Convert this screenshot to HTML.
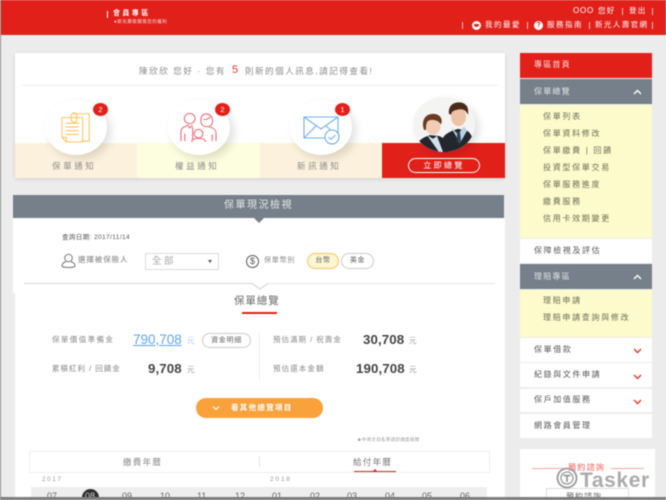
<!DOCTYPE html>
<html lang="zh-Hant"><head><meta charset="utf-8"><style>
*{box-sizing:border-box}
html,body{margin:0;padding:0;width:666px;height:500px;overflow:hidden;background:#ececec}
#p{position:relative;width:666px;height:500px;overflow:hidden;background:#ececec;filter:blur(.55px);font-family:"Liberation Sans","Noto Sans CJK TC",sans-serif;color:#666}
.a{position:absolute}
.t{position:absolute;white-space:nowrap;line-height:1}
.m{font-size:8px;letter-spacing:1.7px;color:#6d6d55}
.w{font-size:8px;letter-spacing:1.6px;color:#555}
.c{position:absolute;width:62px;height:55px;border-radius:50%;background:#fff;box-shadow:4px 4px 9px rgba(0,0,0,.13)}
.b{position:absolute;width:15px;height:13px;border-radius:50%;background:#e2201a;color:#fff;font-size:7.5px;line-height:13px;text-align:center}
.l{position:absolute;font-size:9px;letter-spacing:1.8px;color:#888;white-space:nowrap;line-height:1}
.n{position:absolute;font-size:13.3px;font-weight:bold;color:#444;white-space:nowrap;line-height:1;letter-spacing:.1px}
.y{position:absolute;font-size:6.5px;color:#999;line-height:1}
.mo{position:absolute;font-size:9px;color:#666;line-height:1;top:492px}
</style></head><body><div id="p">
<div class="a" style="left:0;top:0;width:1px;height:500px;background:#8a8a8a;z-index:5"></div>
<!-- header -->
<div class="a" style="left:0;top:0;width:666px;height:35px;background:#e2201a"></div>
<div class="a" style="left:107px;top:11px;width:1px;height:7px;background:#fff"></div>
<div class="t" style="left:113px;top:10px;font-size:7px;letter-spacing:2.4px;font-weight:bold;color:#fff">會員專區</div>
<div class="t" style="left:114px;top:20px;font-size:4.5px;letter-spacing:.5px;color:#fbdcdc">●新光壽險關懷您的權利</div>
<div class="t" style="left:573px;top:7px;font-size:8px;letter-spacing:.8px;color:#fff">OOO</div>
<div class="t" style="left:598px;top:7px;font-size:7.5px;letter-spacing:1.2px;color:#fff">您好</div>
<div class="a" style="left:622px;top:8px;width:1px;height:7px;background:#f7bcbc"></div>
<div class="t" style="left:629px;top:7px;font-size:7.5px;letter-spacing:1.2px;color:#fff">登出</div>
<div class="a" style="left:652px;top:8px;width:1px;height:7px;background:#f7bcbc"></div>
<div class="a" style="left:462px;top:22px;width:1px;height:7px;background:#f7bcbc"></div>
<div class="a" style="left:472px;top:21px;width:9px;height:9px;border-radius:50%;background:#fff"></div>
<div class="a" style="left:474px;top:23.5px;width:5px;height:3px;background:#e2201a;border-radius:0 0 3px 3px"></div>
<div class="t" style="left:485px;top:21px;font-size:7.5px;letter-spacing:1.5px;color:#fff">我的最愛</div>
<div class="a" style="left:527px;top:22px;width:1px;height:7px;background:#f7bcbc"></div>
<div class="a" style="left:534px;top:21px;width:9px;height:9px;border-radius:50%;background:#fff;color:#e2201a;font-size:7px;line-height:9px;text-align:center;font-weight:bold">?</div>
<div class="t" style="left:547px;top:21px;font-size:7.5px;letter-spacing:1.5px;color:#fff">服務指南</div>
<div class="a" style="left:589px;top:22px;width:1px;height:7px;background:#f7bcbc"></div>
<div class="t" style="left:595px;top:21px;font-size:7.5px;letter-spacing:1.4px;color:#fff">新光人壽官網</div>
<div class="a" style="left:652px;top:22px;width:1px;height:7px;background:#f7bcbc"></div>

<!-- notification card -->
<div class="a" style="left:15px;top:53px;width:490px;height:125px;background:#fff;box-shadow:0 1px 4px rgba(0,0,0,.12)"></div>
<div class="t" style="left:139px;top:67px;font-size:8.5px;letter-spacing:1.6px;color:#8a8a8a">陳欣欣 您好 · 您有</div>
<div class="t" style="left:232px;top:65px;font-size:11px;color:#e8332c">5</div>
<div class="t" style="left:245px;top:67px;font-size:8.5px;letter-spacing:1.55px;color:#8a8a8a">則新的個人訊息,請記得查看!</div>
<div class="a" style="left:22px;top:85px;width:476px;height:1px;background:#ececec"></div>
<div class="a" style="left:15px;top:143px;width:122px;height:35px;background:#fcf1dc"></div>
<div class="a" style="left:137px;top:143px;width:123px;height:35px;background:#fdfddf"></div>
<div class="a" style="left:260px;top:143px;width:122px;height:35px;background:#fcf1dc"></div>
<div class="a" style="left:382px;top:143px;width:123px;height:35px;background:#e2201a"></div>

<div class="c" style="left:45px;top:100px"></div>
<div class="c" style="left:168px;top:100px"></div>
<div class="c" style="left:290px;top:100px"></div>
<div class="c" style="left:413px;top:97px"></div>

<!-- doc icon -->
<svg class="a" style="left:60px;top:110px" width="32" height="34" viewBox="0 0 34 34" fill="none" stroke="#fbbf4e" stroke-width="1">
<path d="M14 3H31V32H24"/><path d="M2 7H24V33H7L2 28Z"/><path d="M2 28H7V33"/><path d="M6 13H20M6 17H20M6 21H20M6 25H20"/><rect x="12" y="2" width="6" height="10" rx="3"/>
</svg>
<!-- people icon -->
<svg class="a" style="left:179px;top:112px" width="39" height="31" viewBox="0 0 40 33" preserveAspectRatio="none" fill="none" stroke="#ee5a66" stroke-width="1">
<circle cx="11" cy="7" r="5.5"/><path d="M2 31V21C2 17 5 16 9 14L11 17L14 14"/><path d="M6 31V23"/><path d="M14 16V30"/>
<path d="M24 14C21 10 22 2 28 2C34 2 36 10 33 14C31 16 26 16 24 14Z"/><path d="M25 8C28 8 31 7 32 5"/><path d="M31 16C36 17 38 19 38 23V31M34 24V31"/>
<circle cx="20" cy="23" r="4.5"/><path d="M13 32C13 29 16 28 20 28C24 28 27 29 27 32"/>
</svg>
<!-- mail icon -->
<svg class="a" style="left:303px;top:115px" width="38" height="30" viewBox="0 0 38 30" fill="none" stroke="#6fb0f2" stroke-width="1.1">
<path d="M1 2H35V23H1Z"/><path d="M1 2L18 14L35 2"/><path d="M1 23L13 11M23 11L30 17"/>
<circle cx="29" cy="22" r="7" fill="#fff"/><path d="M25.5 22L28 24.5L32.5 20"/>
</svg>

<!-- portrait -->
<svg class="a" style="left:413px;top:97px" width="62" height="55" viewBox="0 0 62 62" preserveAspectRatio="none">
<defs><clipPath id="cp"><circle cx="31" cy="31" r="31"/></clipPath></defs>
<g clip-path="url(#cp)">
<rect width="62" height="62" fill="#f4f4f2"/>
<path d="M30 46C33 40 40 38 45 36L54 38C57 40 59 44 60 48V62H28Z" fill="#23262c"/>
<path d="M38 34L45 42L51 33L54 38L47 52L41 40Z" fill="#b7d3e6"/>
<path d="M44 39H47L48 50L46 53L44 50Z" fill="#2e4258"/>
<ellipse cx="45.5" cy="22" rx="7.5" ry="11" fill="#eec2a5"/>
<path d="M36 19C35 10 40 6 46 6C53 6 56 11 55 20C53 15 50 13 46 14C42 15 39 15 38 20Z" fill="#4a2a1b"/>
<path d="M4 53C7 47 12 45 17 43L26 44C31 46 35 50 37 62H8Z" fill="#23262c"/>
<path d="M14 43L20 47L24 44L30 62H26Z" fill="#cfe2ee"/>
<ellipse cx="20" cy="33" rx="7.5" ry="9.5" fill="#f2cdb5"/>
<path d="M11 37C8 27 12 19 20 19C28 19 30 26 28 31C26 27 22 25 17 26C13 27 13 32 13 37Z" fill="#6b3a22"/>
</g></svg>

<div class="b" style="left:93px;top:103px">2</div>
<div class="b" style="left:215px;top:103px">2</div>
<div class="b" style="left:335px;top:103px">1</div>

<div class="t" style="left:52px;top:162px;font-size:8.5px;letter-spacing:2.6px;color:#8e8e8e">保單通知</div>
<div class="t" style="left:175px;top:162px;font-size:8.5px;letter-spacing:2.6px;color:#8e8e8e">權益通知</div>
<div class="t" style="left:297px;top:162px;font-size:8.5px;letter-spacing:2.6px;color:#8e8e8e">新訊通知</div>
<div class="a" style="left:408px;top:158px;width:72px;height:15px;border:1px solid #fff;border-radius:8px;color:#fff;font-size:8px;letter-spacing:2.4px;line-height:13px;text-align:center">立即總覽</div>

<!-- overview -->
<div class="a" style="left:15px;top:290px;width:490px;height:210px;background:#fff"></div>
<div class="a" style="left:13px;top:218px;width:492px;height:75px;background:#fff"></div>
<div class="a" style="left:13px;top:195px;width:491px;height:23px;background:#76808a"></div>
<div class="a" style="left:254px;top:218px;width:0;height:0;border-left:5px solid transparent;border-right:5px solid transparent;border-top:5px solid #76808a"></div>
<div class="t" style="left:224px;top:201px;font-size:10px;letter-spacing:1.5px;color:#e4e7ea">保單現況檢視</div>

<div class="t" style="left:62px;top:235px;font-size:6.5px;letter-spacing:.4px;color:#555">查詢日期: 2017/11/14</div>
<svg class="a" style="left:61px;top:253px" width="15" height="16" viewBox="0 0 15 16" fill="none" stroke="#777" stroke-width="1"><circle cx="7.5" cy="5" r="3.8"/><path d="M5 8.5C1 10 1 12 1 13C1 15 14 15 14 13C14 11 13 10 10 8.5"/></svg>
<div class="t" style="left:78px;top:256px;font-size:7.5px;letter-spacing:.9px;color:#777">選擇被保險人</div>
<div class="a" style="left:145px;top:253px;width:74px;height:17px;border:1px solid #ddd;background:#fff"></div>
<div class="t" style="left:152px;top:257px;font-size:9.5px;letter-spacing:2.5px;color:#a5a5a5">全部</div>
<div class="a" style="left:208px;top:260px;width:0;height:0;border-left:2.5px solid transparent;border-right:2.5px solid transparent;border-top:3px solid #555"></div>
<div class="a" style="left:246px;top:255px;width:13px;height:13px;border:1px solid #555;border-radius:50%;font-size:9px;line-height:11px;text-align:center;color:#555">$</div>
<div class="t" style="left:264px;top:257px;font-size:7px;letter-spacing:.8px;color:#888">保單幣別</div>
<div class="a" style="left:307px;top:253px;width:32px;height:16px;border:1px solid #f9bf63;border-radius:8px;background:#fdf6d2;font-size:7px;line-height:14px;text-align:center;letter-spacing:.6px;color:#666">台幣</div>
<div class="a" style="left:341px;top:253px;width:33px;height:16px;border:1px solid #ccc;border-radius:8px;background:#fff;font-size:7px;line-height:14px;text-align:center;letter-spacing:.6px;color:#666">美金</div>

<div class="a" style="left:24px;top:283px;width:228px;height:1px;background:#d8d8d8"></div>
<div class="a" style="left:267px;top:283px;width:228px;height:1px;background:#e6e6e6"></div>
<svg class="a" style="left:250px;top:283px" width="20" height="7" viewBox="0 0 20 7" fill="none" stroke="#d0d0d0"><path d="M2 .5L10 6L18 .5"/></svg>
<div class="t" style="left:234px;top:296px;font-size:10.5px;letter-spacing:.9px;color:#666">保單總覽</div>
<div class="a" style="left:242px;top:312px;width:35px;height:2px;background:#e2201a"></div>

<div class="l" style="left:52px;top:336px;font-size:7.5px;letter-spacing:1.4px">保單價值準備金</div>
<div class="t" style="left:133px;top:333px;font-size:13.5px;color:#5da5ea;text-decoration:underline">790,708</div>
<div class="t" style="left:187px;top:337px;font-size:7.5px;color:#a5c8ea">元</div>
<div class="a" style="left:202px;top:333px;width:49px;height:15px;border:1px solid #ccc;border-radius:8px;font-size:7px;line-height:13px;text-align:center;letter-spacing:.7px;color:#666">資金明細</div>
<div class="l" style="left:52px;top:365px;font-size:7.5px;letter-spacing:1px">累積紅利 / 回饋金</div>
<div class="n" style="left:148px;top:362px">9,708</div>
<div class="t" style="left:187px;top:366px;font-size:7.5px;color:#999">元</div>
<div class="a" style="left:259px;top:333px;width:1px;height:47px;background:#eee"></div>
<div class="l" style="left:273px;top:336px;font-size:7.5px;letter-spacing:1px">預估滿期 / 祝壽金</div>
<div class="n" style="left:363px;top:333px">30,708</div>
<div class="t" style="left:409px;top:337px;font-size:7.5px;color:#999">元</div>
<div class="l" style="left:273px;top:365px;font-size:7.5px;letter-spacing:1.1px">預估還本金額</div>
<div class="n" style="left:356px;top:362px">190,708</div>
<div class="t" style="left:409px;top:366px;font-size:7.5px;color:#999">元</div>

<div class="a" style="left:196px;top:398px;width:127px;height:20px;border-radius:10px;background:#f9a13a"></div>
<svg class="a" style="left:212px;top:405px" width="8" height="6" viewBox="0 0 8 6" fill="none" stroke="#fff" stroke-width="1.2"><path d="M1 1.5L4 4.5L7 1.5"/></svg>
<div class="t" style="left:231px;top:404px;font-size:7.5px;font-weight:bold;letter-spacing:1.3px;color:#fff">看其他總覽項目</div>

<div class="t" style="left:357px;top:438px;font-size:4.5px;letter-spacing:.3px;color:#999">★中英文白名單請舒適度保障</div>

<div class="a" style="left:29px;top:451px;width:461px;height:22px;border:1px solid #eee;background:#fff"></div>
<div class="a" style="left:259px;top:456px;width:1px;height:11px;background:#e6e6e6"></div>
<div class="t" style="left:123px;top:458px;font-size:8.5px;letter-spacing:1.3px;color:#888">繳費年曆</div>
<div class="t" style="left:353px;top:458px;font-size:8.5px;letter-spacing:1.3px;color:#777">給付年曆</div>
<div class="a" style="left:354px;top:471px;width:42px;height:1px;background:#e2201a"></div>
<div class="a" style="left:372px;top:469px;width:0;height:0;border-left:3px solid transparent;border-right:3px solid transparent;border-bottom:3px solid #e2201a"></div>
<div class="y" style="left:42px;top:477px;letter-spacing:1.5px">2017</div>
<div class="y" style="left:270px;top:477px;letter-spacing:1.8px">2018</div>
<div class="a" style="left:31px;top:487px;width:456px;height:13px;background:#eeeeee"></div>
<div class="a" style="left:82px;top:489px;width:17px;height:17px;border-radius:50%;background:#2d2d2d"></div>
<div class="mo" style="left:47px">07</div><div class="mo" style="left:85px;color:#ccc">08</div><div class="mo" style="left:122px">09</div><div class="mo" style="left:160px">10</div><div class="mo" style="left:197px">11</div><div class="mo" style="left:235px">12</div>
<div class="mo" style="left:272px">01</div><div class="mo" style="left:310px">02</div><div class="mo" style="left:347px">03</div><div class="mo" style="left:385px">04</div><div class="mo" style="left:422px">05</div><div class="mo" style="left:460px">06</div>

<!-- sidebar -->
<div class="a" style="left:520px;top:53px;width:132px;height:25px;background:#e2201a"></div>
<div class="t" style="left:534px;top:61px;font-size:8px;letter-spacing:1.2px;color:#fbe1e0">專區首頁</div>
<div class="a" style="left:520px;top:79px;width:132px;height:25px;background:#76808a"></div>
<div class="t" style="left:534px;top:88px;font-size:8px;letter-spacing:1.2px;color:#dfe3e6">保單總覽</div>
<svg class="a" style="left:633px;top:89px" width="9" height="6" viewBox="0 0 9 6" fill="none" stroke="#fff" stroke-width="1.4"><path d="M1 5L4.5 1.5L8 5"/></svg>
<div class="a" style="left:520px;top:105px;width:132px;height:133px;background:#fdfbcc"></div>
<div class="t m" style="left:543px;top:113px">保單列表</div>
<div class="t m" style="left:543px;top:130px">保單資料修改</div>
<div class="t m" style="left:543px;top:147px">保單繳費 | 回饋</div>
<div class="t m" style="left:543px;top:164px">投資型保單交易</div>
<div class="t m" style="left:543px;top:181px">保單服務進度</div>
<div class="t m" style="left:543px;top:198px">繳費服務</div>
<div class="t m" style="left:543px;top:215px">信用卡效期變更</div>
<div class="a" style="left:520px;top:239px;width:132px;height:24px;background:#fff"></div>
<div class="t w" style="left:534px;top:247px">保障檢視及評估</div>
<div class="a" style="left:520px;top:264px;width:132px;height:25px;background:#76808a"></div>
<div class="t" style="left:534px;top:273px;font-size:8px;letter-spacing:1.2px;color:#dfe3e6">理賠專區</div>
<svg class="a" style="left:633px;top:274px" width="9" height="6" viewBox="0 0 9 6" fill="none" stroke="#fff" stroke-width="1.4"><path d="M1 5L4.5 1.5L8 5"/></svg>
<div class="a" style="left:520px;top:290px;width:132px;height:47px;background:#fdfbcc"></div>
<div class="t m" style="left:543px;top:297px">理賠申請</div>
<div class="t m" style="left:543px;top:314px">理賠申請查詢與修改</div>
<div class="a" style="left:520px;top:338px;width:132px;height:24px;background:#fff"></div>
<div class="t w" style="left:534px;top:346px">保單借款</div>
<div class="a" style="left:520px;top:363px;width:132px;height:24px;background:#fff"></div>
<div class="t w" style="left:534px;top:371px">紀錄與文件申請</div>
<div class="a" style="left:520px;top:389px;width:132px;height:23px;background:#fff"></div>
<div class="t w" style="left:534px;top:396px">保戶加值服務</div>
<div class="a" style="left:520px;top:414px;width:132px;height:24px;background:#fff"></div>
<div class="t w" style="left:534px;top:422px">網路會員管理</div>
<svg class="a" style="left:633px;top:348px" width="9" height="6" viewBox="0 0 9 6" fill="none" stroke="#e8332c" stroke-width="1.4"><path d="M1 1L4.5 4.5L8 1"/></svg>
<svg class="a" style="left:633px;top:374px" width="9" height="6" viewBox="0 0 9 6" fill="none" stroke="#e8332c" stroke-width="1.4"><path d="M1 1L4.5 4.5L8 1"/></svg>
<svg class="a" style="left:633px;top:399px" width="9" height="6" viewBox="0 0 9 6" fill="none" stroke="#e8332c" stroke-width="1.4"><path d="M1 1L4.5 4.5L8 1"/></svg>

<div class="a" style="left:520px;top:449px;width:135px;height:51px;background:#fff"></div>
<div class="a" style="left:532px;top:468px;width:33px;height:1px;background:#f3a6a3"></div>
<div class="a" style="left:611px;top:468px;width:33px;height:1px;background:#f3a6a3"></div>
<div class="t" style="left:568px;top:464px;font-size:8px;letter-spacing:1.3px;color:#ee5a55">預約諮詢</div>
<div class="a" style="left:546px;top:488px;width:83px;height:14px;border:1px solid #ddd;background:#fff"></div>
<div class="t" style="left:566px;top:493px;font-size:8px;letter-spacing:1px;color:#666">預約諮詢</div>

<!-- watermark -->
<svg class="a" style="left:556px;top:467px" width="22" height="24" viewBox="0 0 22 24" fill="none" stroke="#9a9a9a"><circle cx="11" cy="11" r="9.5" stroke-width="1.8"/><circle cx="11" cy="11" r="6" stroke-width="1.3"/><path d="M7.5 8.5H14.5M11 8.5V15" stroke-width="1.8"/></svg>
<div class="t" style="left:580px;top:470px;font-size:21px;font-weight:bold;letter-spacing:.6px;color:#a3a3a3;opacity:.9">Tasker</div>

<div class="a" style="left:0;top:497px;width:666px;height:3px;background:#7d7d7d;z-index:5"></div>
</div></body></html>
